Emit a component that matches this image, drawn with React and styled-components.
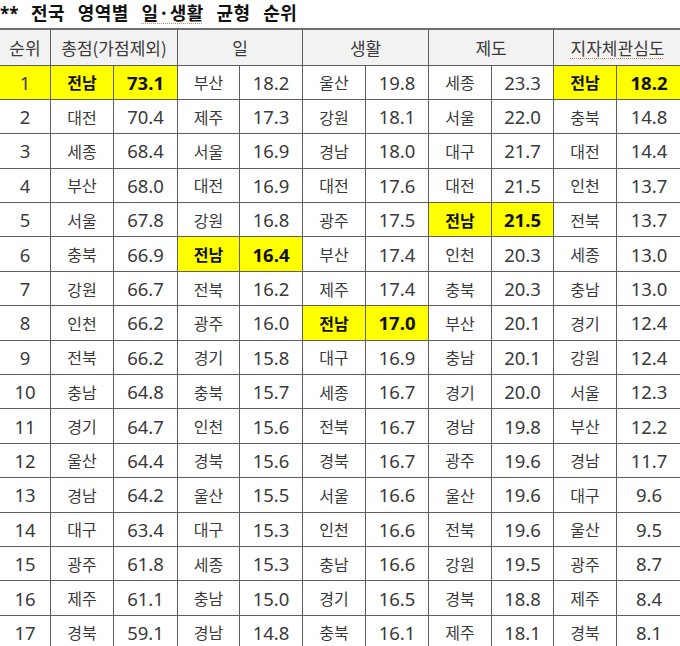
import React from "react";
import styled, { createGlobalStyle } from "styled-components";

const Global = createGlobalStyle`
  html, body { margin: 0; padding: 0; background: #fff; }
  body { font-family: "Noto Sans CJK KR", "Noto Sans", sans-serif; overflow: hidden; }
`;

const Page = styled.div`
  width: 680px;
  height: 646px;
  overflow: hidden;
  background: #fff;
`;

const Title = styled.h1`
  margin: 0;
  height: 28px;
  font-size: 18px;
  line-height: 24px;
  font-weight: 700;
  letter-spacing: 0.5px;
  word-spacing: 8px;
  color: #111;
  white-space: nowrap;
`;

const Stars = styled.span`
  font-family: "Noto Sans", sans-serif;
  font-size: 17px;
  letter-spacing: 0;
`;

const Spell = styled.span`
  text-decoration: underline dotted #d9825b;
  text-underline-offset: 3px;
  text-decoration-thickness: 1px;
`;

const TableWrap = styled.div`
  margin-left: -1px;
`;

const Table = styled.table`
  border-collapse: collapse;
  table-layout: fixed;
  width: 682px;
  color: #3a3a3a;
`;

const HeadRow = styled.tr`
  height: 36px;
  background: #f2f2f2;
`;

const Row = styled.tr`
  height: 34.4px;
`;

const HeadCell = styled.th`
  border: 1px solid #5e5e5e;
  border-top: 2px solid #707070;
  font-family: "Noto Sans CJK KR", sans-serif;
  font-size: 17px;
  font-weight: 400;
  text-align: center;
  padding: 0;
  color: #3a3a3a;
`;

const Cell = styled.td`
  border: 1px solid #5e5e5e;
  text-align: center;
  padding: 0;
  font-family: ${(p) => (p.$num ? '"Noto Sans", sans-serif' : '"Noto Sans CJK KR", sans-serif')};
  font-size: ${(p) => (p.$num ? "18.5px" : "16px")};
  background: ${(p) => (p.$hl ? "#ffff00" : "#fff")};
  font-weight: ${(p) => (p.$bold ? 700 : 400)};
  color: ${(p) => (p.$bold ? "#111" : "#3a3a3a")};
`;

const data = [
  ["전남", "73.1", "부산", "18.2", "울산", "19.8", "세종", "23.3", "전남", "18.2"],
  ["대전", "70.4", "제주", "17.3", "강원", "18.1", "서울", "22.0", "충북", "14.8"],
  ["세종", "68.4", "서울", "16.9", "경남", "18.0", "대구", "21.7", "대전", "14.4"],
  ["부산", "68.0", "대전", "16.9", "대전", "17.6", "대전", "21.5", "인천", "13.7"],
  ["서울", "67.8", "강원", "16.8", "광주", "17.5", "전남", "21.5", "전북", "13.7"],
  ["충북", "66.9", "전남", "16.4", "부산", "17.4", "인천", "20.3", "세종", "13.0"],
  ["강원", "66.7", "전북", "16.2", "제주", "17.4", "충북", "20.3", "충남", "13.0"],
  ["인천", "66.2", "광주", "16.0", "전남", "17.0", "부산", "20.1", "경기", "12.4"],
  ["전북", "66.2", "경기", "15.8", "대구", "16.9", "충남", "20.1", "강원", "12.4"],
  ["충남", "64.8", "충북", "15.7", "세종", "16.7", "경기", "20.0", "서울", "12.3"],
  ["경기", "64.7", "인천", "15.6", "전북", "16.7", "경남", "19.8", "부산", "12.2"],
  ["울산", "64.4", "경북", "15.6", "경북", "16.7", "광주", "19.6", "경남", "11.7"],
  ["경남", "64.2", "울산", "15.5", "서울", "16.6", "울산", "19.6", "대구", "9.6"],
  ["대구", "63.4", "대구", "15.3", "인천", "16.6", "전북", "19.6", "울산", "9.5"],
  ["광주", "61.8", "세종", "15.3", "충남", "16.6", "강원", "19.5", "광주", "8.7"],
  ["제주", "61.1", "충남", "15.0", "경기", "16.5", "경북", "18.8", "제주", "8.4"],
  ["경북", "59.1", "경남", "14.8", "충북", "16.1", "제주", "18.1", "경북", "8.1"],
];

const colWidths = [51, 63, 64, 62, 63, 63, 63, 63, 62, 63, 65];

export default function App() {
  return (
    <Page>
      <Global />
      <Title>
        <Stars>**</Stars> 전국 영역별 <Spell>일·생활</Spell> 균형 순위
      </Title>
      <TableWrap>
        <Table>
          <colgroup>
            {colWidths.map((w, i) => (
              <col key={i} style={{ width: w }} />
            ))}
          </colgroup>
          <thead>
            <HeadRow>
              <HeadCell>순위</HeadCell>
              <HeadCell colSpan={2}>총점(가점제외)</HeadCell>
              <HeadCell colSpan={2}>일</HeadCell>
              <HeadCell colSpan={2}>생활</HeadCell>
              <HeadCell colSpan={2}>제도</HeadCell>
              <HeadCell colSpan={2}>
                <Spell>지자체관심도</Spell>
              </HeadCell>
            </HeadRow>
          </thead>
          <tbody>
            {data.map((r, i) => (
              <Row key={i}>
                <Cell $num $hl={i === 0}>
                  {i + 1}
                </Cell>
                {r.map((v, j) => {
                  const pair = Math.floor(j / 2);
                  const hl = r[pair * 2] === "전남";
                  return (
                    <Cell key={j} $num={j % 2 === 1} $hl={hl} $bold={hl}>
                      {v}
                    </Cell>
                  );
                })}
              </Row>
            ))}
          </tbody>
        </Table>
      </TableWrap>
    </Page>
  );
}
